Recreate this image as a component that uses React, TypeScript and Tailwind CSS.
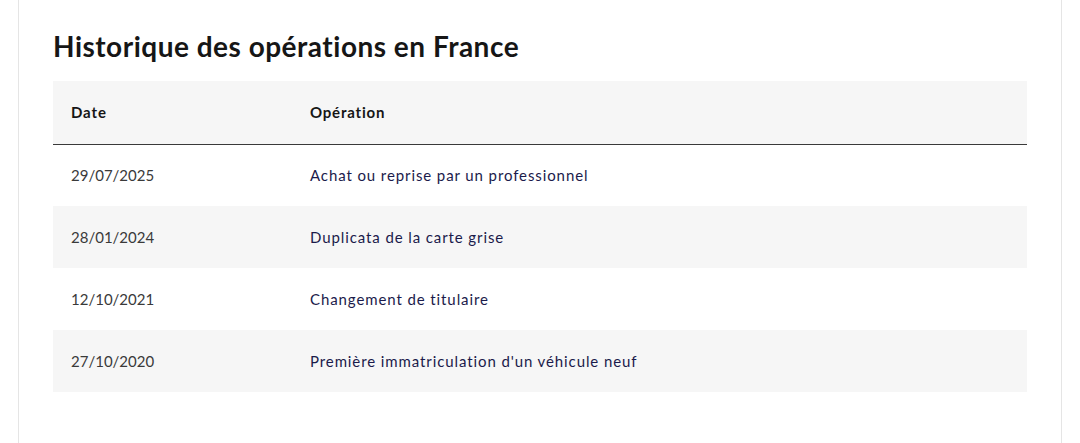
import React from 'react';

const operations = [
  { date: '29/07/2025', label: 'Achat ou reprise par un professionnel' },
  { date: '28/01/2024', label: 'Duplicata de la carte grise' },
  { date: '12/10/2021', label: 'Changement de titulaire' },
  { date: '27/10/2020', label: "Première immatriculation d'un véhicule neuf" },
];

export default function App() {
  return (
    <div className="min-h-[443px] bg-white px-[18px]" style={{ fontFamily: 'Lato, "Noto Sans", sans-serif' }}>
      <div className="min-h-[443px] border-x border-[#e5e5e5] px-[34px] pt-[28px]">
        <h2 className="text-[28px] leading-9 font-bold text-[#161616] tracking-[0.5px]">
          Historique des opérations en France
        </h2>
        <table className="mt-[17px] w-full border-collapse text-[15px]">
          <thead>
            <tr className="bg-[#f6f6f6] border-b border-[#3a3a3a]">
              <th className="w-[240px] h-[63px] px-[18px] text-left font-bold text-[#161616] tracking-[0.9px]">Date</th>
              <th className="h-[63px] px-[17px] text-left font-bold text-[#161616] tracking-[0.8px]">Opération</th>
            </tr>
          </thead>
          <tbody>
            {operations.map((op, i) => (
              <tr key={op.date} className={i % 2 === 1 ? 'bg-[#f6f6f6]' : 'bg-white'}>
                <td className="h-[62px] px-[18px] text-[#3a3a3a]">{op.date}</td>
                <td className="h-[62px] px-[17px] text-[#1b1b4b] tracking-[0.9px]">{op.label}</td>
              </tr>
            ))}
          </tbody>
        </table>
      </div>
    </div>
  );
}
